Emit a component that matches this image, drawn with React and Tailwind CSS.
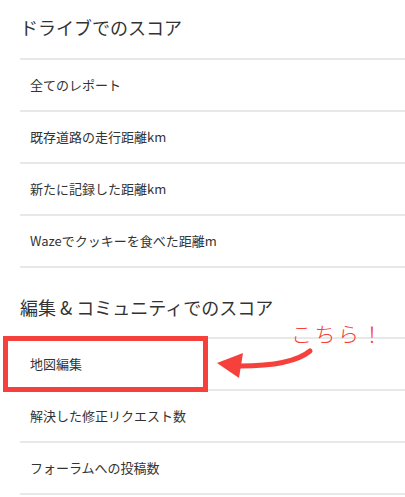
import React from 'react';

const driveScores = [
  '全てのレポート',
  '既存道路の走行距離km',
  '新たに記録した距離km',
  'Wazeでクッキーを食べた距離m',
];

const editScores = ['地図編集', '解決した修正リクエスト数', 'フォーラムへの投稿数'];

const ScoreList = ({ items }) => (
  <ul className="border-t-2 border-[#e8e8e8]">
    {items.map((item) => (
      <li
        key={item}
        className="h-[52px] border-b-2 border-[#e8e8e8] pl-[10px] flex items-center text-[13px] text-[#333]"
      >
        {item}
      </li>
    ))}
  </ul>
);

export default function App() {
  return (
    <div
      className="relative w-[405px] h-[497px] bg-white overflow-hidden"
      style={{ fontFamily: '"Noto Sans CJK JP", "Noto Sans", sans-serif' }}
    >
      <div className="pl-[20px]">
        <h2 className="h-[58px] pb-[4px] flex items-center text-[18px] text-[#333]">
          ドライブでのスコア
        </h2>
        <ScoreList items={driveScores} />

        <h2 className="h-[69px] pt-[10px] flex items-center text-[18px] text-[#333]">
          編集 &amp; コミュニティでのスコア
        </h2>
        <ScoreList items={editScores} />
      </div>

      {/* annotation */}
      <div className="absolute left-[3px] top-[336px] w-[205px] h-[56px] border-[5px] border-[#f6403b]" />
      <div className="absolute left-[291px] top-[318px] text-[21px] font-light text-[#f6403b] tracking-[2.5px]">
        こちら！
      </div>
      <svg className="absolute left-[200px] top-[320px]" width="205" height="70" viewBox="0 0 205 70">
        <path d="M110 31 Q92 46 40 46" fill="none" stroke="#f6403b" strokeWidth="5" strokeLinecap="round" />
        <polygon points="17,43 43,33 39,58" fill="#f6403b" />
      </svg>
    </div>
  );
}
